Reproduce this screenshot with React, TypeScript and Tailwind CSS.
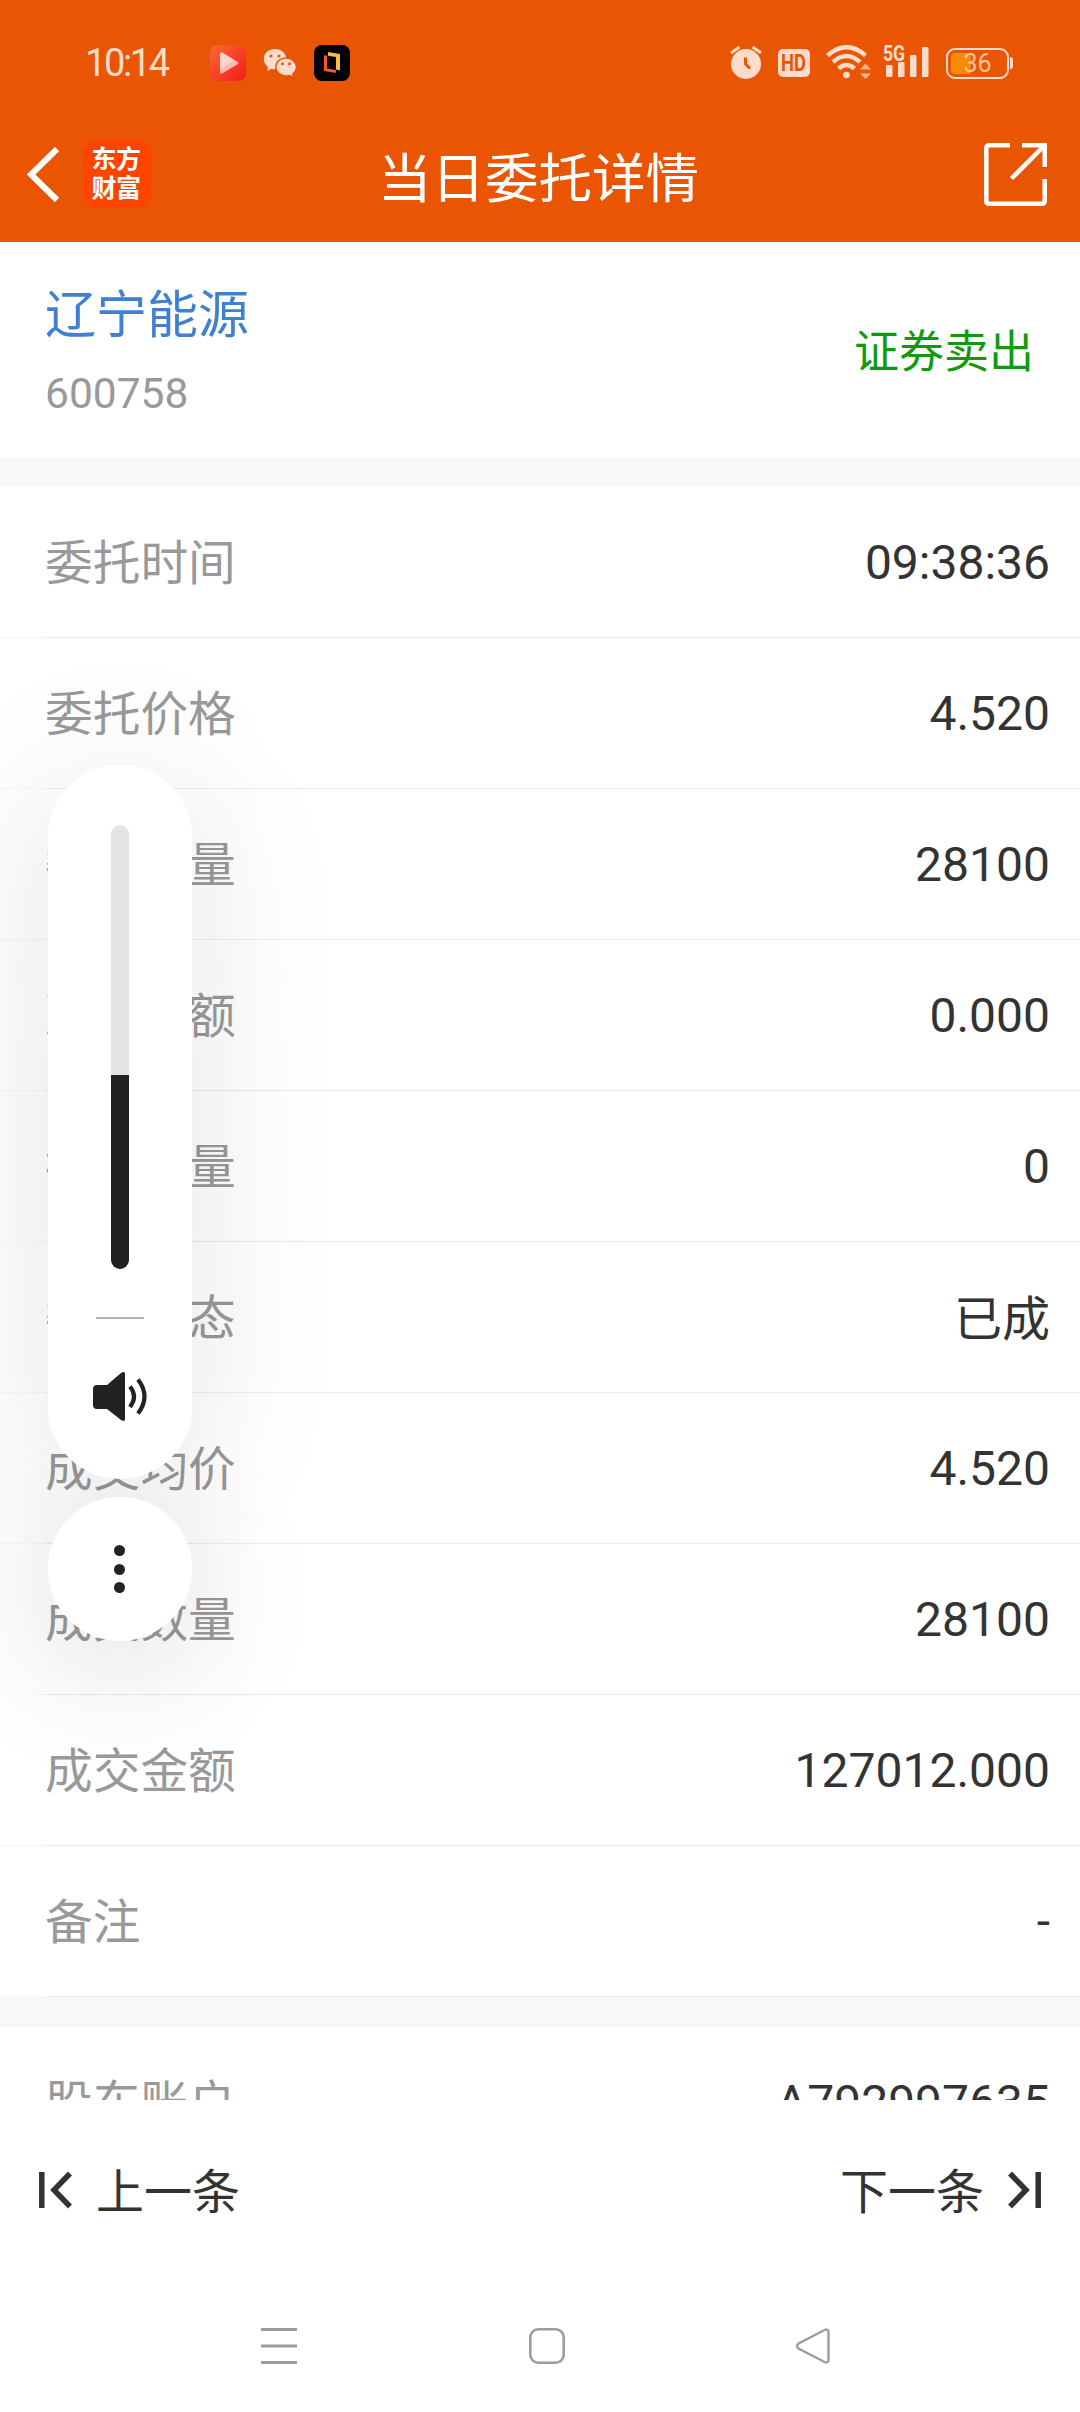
import React from 'react';
import clsx from 'clsx';

interface DetailRow {
  label: string;
  value: string;
}

const ROWS: DetailRow[] = [
  { label: '委托时间', value: '09:38:36' },
  { label: '委托价格', value: '4.520' },
  { label: '委托数量', value: '28100' },
  { label: '冻结金额', value: '0.000' },
  { label: '撤单数量', value: '0' },
  { label: '委托状态', value: '已成' },
  { label: '成交均价', value: '4.520' },
  { label: '成交数量', value: '28100' },
  { label: '成交金额', value: '127012.000' },
  { label: '备注', value: '-' },
];

const StatusBar: React.FC = () => (
  <div className="flex h-[126px] items-center pl-[85px] pr-[67px] text-[#fddccb]">
    <span className="w-[125px] text-[38px] leading-none tracking-[-2.4px]">10:14</span>

    <svg width="36" height="36" viewBox="0 0 36 36">
      <defs>
        <linearGradient id="play" x1="0" y1="0" x2="1" y2="1">
          <stop offset="0" stopColor="#fb6a33" />
          <stop offset="1" stopColor="#f21c1c" />
        </linearGradient>
      </defs>
      <rect width="36" height="36" rx="8" fill="url(#play)" />
      <path d="M12 7.5L28 17Q29 18 28 19L12 28.5Q10 29 10 27V9Q10 7 12 7.5Z" fill="#fdb9b0" />
      <path d="M12 7.5L24 15L10 24V9Q10 7 12 7.5Z" fill="#fdd3cb" />
    </svg>

    <svg className="ml-[17px]" width="34" height="30" viewBox="0 0 34 30">
      <path d="M12 1C5.500 1 0.800 5.300 0.800 11C0.800 14.300 2.400 17 5 19L4 23L8.500 20.700Q10.200 21.200 12 21.200C18 21.200 23.200 16.700 23.200 11C23.200 5.300 18.300 1 12 1Z" fill="#fddccb" />
      <circle cx="8" cy="8" r="1.600" fill="#ea5504" />
      <circle cx="16" cy="8" r="1.600" fill="#ea5504" />
      <path d="M23 10C17.400 10 12.800 14 12.800 19C12.800 24 17.400 28 23 28Q25 28 26.700 27.400L30.500 29.300L29.700 25.800C32 24.200 33.400 21.800 33.400 19C33.400 14 28.700 10 23 10Z" fill="#fddccb" stroke="#ea5504" strokeWidth="1.400" />
      <circle cx="19.500" cy="15.700" r="1.500" fill="#ea5504" />
      <circle cx="26.500" cy="15.700" r="1.500" fill="#ea5504" />
    </svg>

    <svg className="ml-[17px]" width="36" height="36" viewBox="0 0 36 36">
      <rect width="36" height="36" rx="8" fill="#000" />
      <path d="M10 10.500H13V23.500L22 25V28L10 26Z" fill="#ee5a24" />
      <path d="M14 7L26 9V25.500L22 24.500V12L14 10.800Z" fill="#f8bd3a" />
    </svg>

    <div className="flex-1" />

    {/* alarm */}
    <svg width="32" height="36" viewBox="0 0 32 36" fill="none">
      <circle cx="16" cy="19" r="15" fill="#fddccb" />
      <path d="M1 8L9.500 2M31 8L22.500 2" stroke="#fddccb" strokeWidth="3" />
      <path d="M15.500 12.500V19L20 23.500" stroke="#ea5504" strokeWidth="3" />
    </svg>

    <div className="ml-4 flex h-7 w-8 items-center justify-center rounded-[5px] bg-[#fddccb] text-[23px] font-bold leading-none text-[#ea5504]">
      <span className="scale-x-[0.8]">HD</span>
    </div>

    {/* wifi */}
    <svg className="ml-4" width="45" height="36" viewBox="0 0 45 36" fill="none">
      <path d="M1.500 10.500Q20.500 -6 39.500 10.500" stroke="#fddccb" strokeWidth="4.500" />
      <path d="M7 17Q20.500 5 34 17" stroke="#fddccb" strokeWidth="4.500" />
      <path d="M12.500 23.500Q20.500 16.500 28.500 23.500" stroke="#fddccb" strokeWidth="4.500" />
      <circle cx="20.500" cy="30" r="3.300" fill="#fddccb" />
      <path d="M34 24.500L39.500 18.500L45 24.500ZM34 28.500H45L39.500 34Z" fill="#f9b591" />
    </svg>

    {/* signal */}
    <div className="relative ml-[12px] mr-px h-9 w-[47px]">
      <span className="absolute left-0 top-0 origin-left scale-x-[0.8] text-[22px] font-bold leading-[18px]">5G</span>
      <svg width="47" height="36" viewBox="0 0 47 36" fill="#fddccb">
        <rect x="3" y="20" width="6.500" height="12" rx="1" />
        <rect x="15" y="17" width="6.500" height="15" rx="1" />
        <rect x="27" y="10" width="6.500" height="22" rx="1" />
        <rect x="39" y="2" width="6.500" height="30" rx="1" />
      </svg>
    </div>

    {/* battery */}
    <div className="ml-[15px] flex items-center">
      <div className="relative flex h-[31px] w-[63px] items-center justify-center rounded-[9px] border-2 border-[#fddccb]">
        <div className="absolute left-[3px] top-[3px] h-[21px] w-5 rounded-l-[4px] bg-[#f78b08]" />
        <span className="relative text-[25px] leading-none text-[#fbc49a]">36</span>
      </div>
      <div className="ml-px h-3 w-[3px] rounded-r bg-[#fddccb]" />
    </div>
  </div>
);

const TitleBar: React.FC = () => (
  <div className="flex h-[116px] items-start justify-between pl-[27px] pr-[33px]">
    <div className="flex w-[300px] pt-[14px]">
      <svg className="mt-[7px]" width="34" height="56" viewBox="0 0 34 56" fill="none">
        <path d="M30 2L4 27.500L30 53" stroke="#fff" strokeWidth="6" />
      </svg>
      <div className="ml-[22px] flex h-[68px] w-[68px] flex-col items-center justify-center rounded-[14px] bg-[#ff4400] pr-0.5 text-[25px] font-bold leading-[29px] tracking-[-0.5px] text-white">
        <span>东方</span>
        <span>财富</span>
      </div>
    </div>
    <h1 className="pt-[27px] text-[53.500px] leading-[54px] text-white">当日委托详情</h1>
    <div className="flex w-[297px] justify-end pt-[17px]">
      <svg width="63" height="63" viewBox="0 0 63 63" fill="none" stroke="#fff" strokeWidth="4.500">
        <path d="M26 2.300H5Q2.300 2.300 2.300 5V58Q2.300 60.700 5 60.700H58Q60.700 60.700 60.700 58V36" />
        <path d="M38 2.300H60.700V24" />
        <path d="M60 3L27.500 35.500" />
      </svg>
    </div>
  </div>
);

const Row: React.FC<DetailRow> = ({ label, value }) => {
  const isNumeric = /^[A-Z\d.:-]+$/.test(value);

  return (
    <div className="bg-[#f7f8fa]">
      <div className="flex h-[150px] items-center justify-between bg-white pl-[45px] pr-[30px] pt-[5px] text-[48px] leading-none">
        <span className="pt-px text-[47.700px] text-[#999999]">{label}</span>
        <span className={clsx('text-[#333333]', isNumeric && 'mb-[3px]')}>{value}</span>
      </div>
      <div className="ml-[45px] h-px bg-[#ebebeb]" />
    </div>
  );
};

const VolumePanel: React.FC = () => (
  <div className="absolute left-12 top-[765px] w-36">
    {/* shadows sit under both surfaces */}
    <div className="absolute inset-x-0 top-0 h-[714px] rounded-full shadow-[0_12px_160px_rgba(0,0,0,0.11)]" />
    <div className="absolute inset-x-0 bottom-0 h-36 rounded-full shadow-[0_24px_140px_rgba(0,0,0,0.16)]" />

    <div className="relative flex h-[714px] flex-col items-center rounded-full bg-white pt-[60px]">
      <div className="flex h-[444px] w-[18px] flex-col justify-end overflow-hidden rounded-full bg-[#e4e4e4]">
        <div className="h-[194px] bg-[#222222]" />
      </div>
      <div className="mt-12 h-0.5 w-12 bg-[#b2b2b2]" />
      <svg className="mt-[52px]" width="56" height="52" viewBox="0 0 56 52" fill="none">
        <path d="M5 14H15L29 2Q33 -0.500 33 3V48Q33 51.500 29 49L15 38H5Q1 38 1 34V18Q1 14 5 14Z" fill="#222222" />
        <path d="M38 15.500Q46 25.500 38 36" stroke="#222222" strokeWidth="4.200" />
        <path d="M46 8.500Q59 25.500 46 42.500" stroke="#222222" strokeWidth="4.200" />
      </svg>
    </div>
    <div className="relative mt-[18px] flex h-36 flex-col items-center justify-center gap-[7.500px] rounded-full bg-white pr-[2px]">
      <div className="size-[11px] rounded-full bg-[#222222]" />
      <div className="size-[11px] rounded-full bg-[#222222]" />
      <div className="size-[11px] rounded-full bg-[#222222]" />
    </div>
  </div>
);

export default function App() {
  return (
    <div className="relative flex h-[2412px] w-[1080px] flex-col overflow-hidden bg-white font-[Roboto,'Noto_Sans_CJK_SC',sans-serif]">
      <header className="bg-[#ea5504]">
        <StatusBar />
        <TitleBar />
      </header>

      <main className="h-[1858px] overflow-hidden">
        <section className="flex h-[215px] items-center justify-between bg-white pl-[45px] pr-[46px] pt-[6px]">
          <div>
            <p className="text-[51px] leading-[60px] text-[#3f80d2]">辽宁能源</p>
            <p className="mt-[23px] text-[42.500px] leading-[50px] text-[#999999]">600758</p>
          </div>
          <span className="text-[45px] leading-none text-[#109a10]">证券卖出</span>
        </section>
        <div className="h-[30px] bg-[#f7f8fa]" />
        {ROWS.map((row) => (
          <Row key={row.label} {...row} />
        ))}
        <div className="h-[30px] bg-[#f7f8fa]" />
        <Row label="股东账户" value="A792997635" />
      </main>

      <footer className="flex h-[180px] items-center justify-between bg-white pl-[39px] pr-[39px] text-[48px] leading-none text-[#333333]">
        <button className="flex items-center">
          <svg width="33" height="38" viewBox="0 0 33 38" fill="none" stroke="#333" strokeWidth="5.500">
            <path d="M2.800 1V37M31 2.500L15 19L31 35.500" />
          </svg>
          <span className="ml-6 pt-[5px]">上一条</span>
        </button>
        <button className="flex items-center">
          <span className="mr-6 pt-[5px]">下一条</span>
          <svg width="33" height="38" viewBox="0 0 33 38" fill="none" stroke="#333" strokeWidth="5.500">
            <path d="M30.200 1V37M2 2.500L18 19L2 35.500" />
          </svg>
        </button>
      </footer>

      <nav className="flex h-[132px] items-center justify-between pl-[261px] pr-[249px]">
        <svg width="36" height="36" viewBox="0 0 36 36" fill="#9c9c9c">
          <path d="M0 0H36V3H0ZM0 16.500H36V19.500H0ZM0 33H36V36H0Z" />
        </svg>
        <svg className="ml-0.5" width="36" height="36" viewBox="0 0 36 36" fill="none" stroke="#9c9c9c" strokeWidth="2.600">
          <rect x="1.300" y="1.300" width="33.400" height="33.400" rx="8" />
        </svg>
        <svg width="36" height="36" viewBox="0 0 36 36" fill="none" stroke="#9c9c9c" strokeWidth="2.400">
          <path d="M29.500 2Q33 0.500 33.500 4V32Q33 35.500 29.500 34L3.500 20.500Q0.500 18 3.500 15.500Z" />
        </svg>
      </nav>

      <VolumePanel />
    </div>
  );
}
